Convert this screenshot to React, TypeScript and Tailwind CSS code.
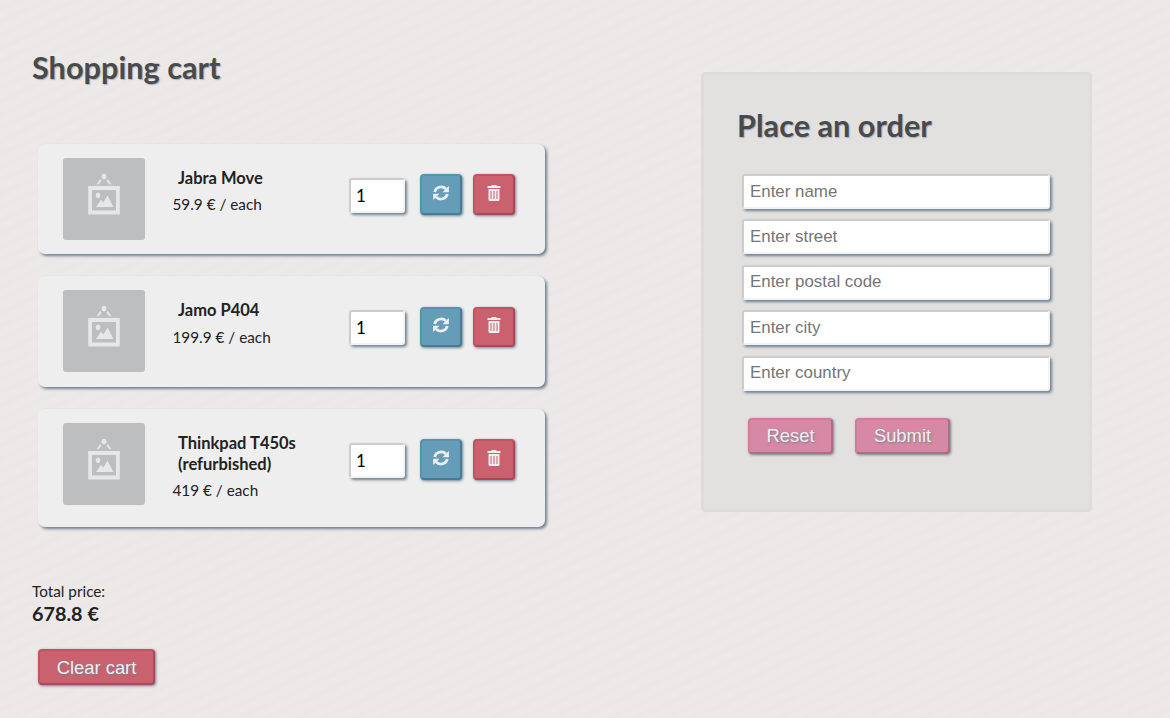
import React from "react";

type Item = { name: string; price: string; h: string };

const items: Item[] = [
  { name: "Jabra Move", price: "59.9", h: "h-[110px]" },
  { name: "Jamo P404", price: "199.9", h: "h-[110.500px]" },
  { name: "Thinkpad T450s (refurbished)", price: "419", h: "h-[118px]" },
];

const fields = ["Enter name", "Enter street", "Enter postal code", "Enter city", "Enter country"];

const heading =
  "text-[30.700px] leading-[38px] font-bold text-[#4a4a4a] [text-shadow:1px_1px_1px_#a3b0c0]";
const button =
  "border-2 rounded-[4px] text-[#eeeeee] [text-shadow:1px_1px_2px_slategray] shadow-[1px_1px_3px_slategray]";
const red = "bg-[#c9616f] border-t-[#c25462] border-l-[#c25462] border-r-[#a9495a] border-b-[#a9495a]";
const blue = "bg-[#659db8] border-t-[#5194b0] border-l-[#5194b0] border-r-[#467c95] border-b-[#467c95]";
const pink = "bg-[#d688a4] border-t-[#d47c9c] border-l-[#d47c9c] border-r-[#b56a84] border-b-[#b56a84]";
const input =
  "block rounded-[3px] border-2 border-t-[#cccccc] border-l-[#cccccc] border-r-[#f3f3f3] border-b-[#f3f3f3] bg-white text-[16.900px] outline-none placeholder:text-[#757575] shadow-[2px_2px_3px_slategray]";

function Placeholder() {
  return (
    <svg viewBox="0 0 82 82" className="h-[82px] w-[82px] shrink-0 rounded-[3px] bg-[#bcbebf]">
      <g fill="#e6e7e8">
        <ellipse cx="41" cy="18.6" rx="2.4" ry="2.8" />
        <path d="M37.200 21l1.4 1.6-2.8 3.700h-2.200zM44.800 21l-1.4 1.6 2.8 3.700h2.200z" />
        <path fillRule="evenodd" d="M25.200 28h31.600v28.600H25.200zM29 32v20.500h24V32z" />
        <ellipse cx="35" cy="37.2" rx="2.2" ry="2.8" />
        <path d="M33 49l5-7.2 2.4 2.8 4-7L50.500 49z" />
      </g>
    </svg>
  );
}

function RefreshIcon() {
  return (
    <svg viewBox="0 0 16 16" className="h-4 w-4" fill="none" stroke="#eeeeee" strokeWidth="2.7">
      <path d="M1.700 7A6.500 5.900 0 0 1 13 4M14.300 9A6.500 5.900 0 0 1 3 12" />
      <path d="M15.900 1v6.200H9.500zM.1 15V8.800h6.400z" fill="#eeeeee" stroke="none" />
    </svg>
  );
}

function TrashIcon() {
  return (
    <svg viewBox="0 0 14 16" className="mr-px h-4 w-[14px]" fill="#eeeeee">
      <path d="M4.500 0h5v1H13.500v2H.5V1h4z" />
      <path fillRule="evenodd" d="M1.500 4h11v10.500q0 1.500-1.500 1.500H3q-1.500 0-1.500-1.500zM3.500 6v8h1V6zM6.500 6v8h1V6zM9.500 6v8h1V6z" />
    </svg>
  );
}

function CartItem({ item }: { item: Item }) {
  return (
    <li
      className={`flex w-[507px] items-start rounded-[7px] bg-[#eeeeee] pt-[14px] pl-[25px] shadow-[2px_2px_3px_slategray] ${item.h}`}
    >
      <Placeholder />
      <div className="ml-[27.500px] w-[176.500px] pt-[10px] text-[15.300px] text-[#222222]">
        <h2 className="w-[130px] pl-[5.500px] text-[16.500px] leading-[21px] font-bold">{item.name}</h2>
        <p className="mt-[5.300px] leading-[21px]">{item.price} € / each</p>
      </div>
      <input className={`${input} mt-[20px] h-[35px] w-[55.500px] px-[5px] pb-[1px]`} defaultValue="1" />
      <button className={`${button} ${blue} mt-[16.300px] ml-[15.500px] flex h-[40.500px] w-[42px] items-center justify-center pb-[3px]`}>
        <RefreshIcon />
      </button>
      <button className={`${button} ${red} mt-[16.300px] ml-[11px] flex h-[40.500px] w-[42px] items-center justify-center pb-[3px]`}>
        <TrashIcon />
      </button>
    </li>
  );
}

export default function App() {
  return (
    <div className="flex h-[718px] w-full items-start overflow-hidden bg-[#ece8e7] bg-[repeating-linear-gradient(155deg,rgba(255,255,255,0.03)_0px,rgba(255,255,255,0.03)_4px,rgba(160,140,140,0.012)_8px,rgba(255,255,255,0.03)_12px)] font-['Lato',sans-serif]">
      <main className="w-[701px] pt-[49px] pl-[32px]">
        <h1 className={heading}>Shopping cart</h1>
        <ul className="mt-[57px] ml-[6px] flex flex-col gap-[22.250px]">
          {items.map((item) => (
            <CartItem key={item.name} item={item} />
          ))}
        </ul>
        <p className="mt-[53px] text-[15.300px] leading-[22px] text-[#222222]">Total price:</p>
        <p className="-mt-px text-[19.800px] leading-[24px] font-bold text-[#222222]">678.8 €</p>
        <button className={`${button} ${red} mt-[24px] ml-[6px] h-[36px] w-[117px] pt-[2px] font-['Liberation_Sans',sans-serif] text-[18.400px]`}>
          Clear cart
        </button>
      </main>
      <form className="mt-[72px] h-[440px] w-[391px] rounded-[4px] border-[3px] border-[#dddddd] bg-[#e2e1e0] pt-[32px] pl-[33px]">
        <h1 className={heading}>Place an order</h1>
        <div className="mt-[29px] ml-[5px] flex flex-col gap-[10.400px] font-['Liberation_Sans',sans-serif]">
          {fields.map((field) => (
            <input key={field} className={`${input} h-[35px] w-[308px] px-[6px]`} placeholder={field} />
          ))}
        </div>
        <div className="mt-[27.400px] ml-[11px] flex gap-[22px] font-['Liberation_Sans',sans-serif] text-[18.400px]">
          <button type="reset" className={`${button} ${pink} h-[36px] w-[85px]`}>Reset</button>
          <button type="button" className={`${button} ${pink} h-[36px] w-[95px]`}>Submit</button>
        </div>
      </form>
    </div>
  );
}
